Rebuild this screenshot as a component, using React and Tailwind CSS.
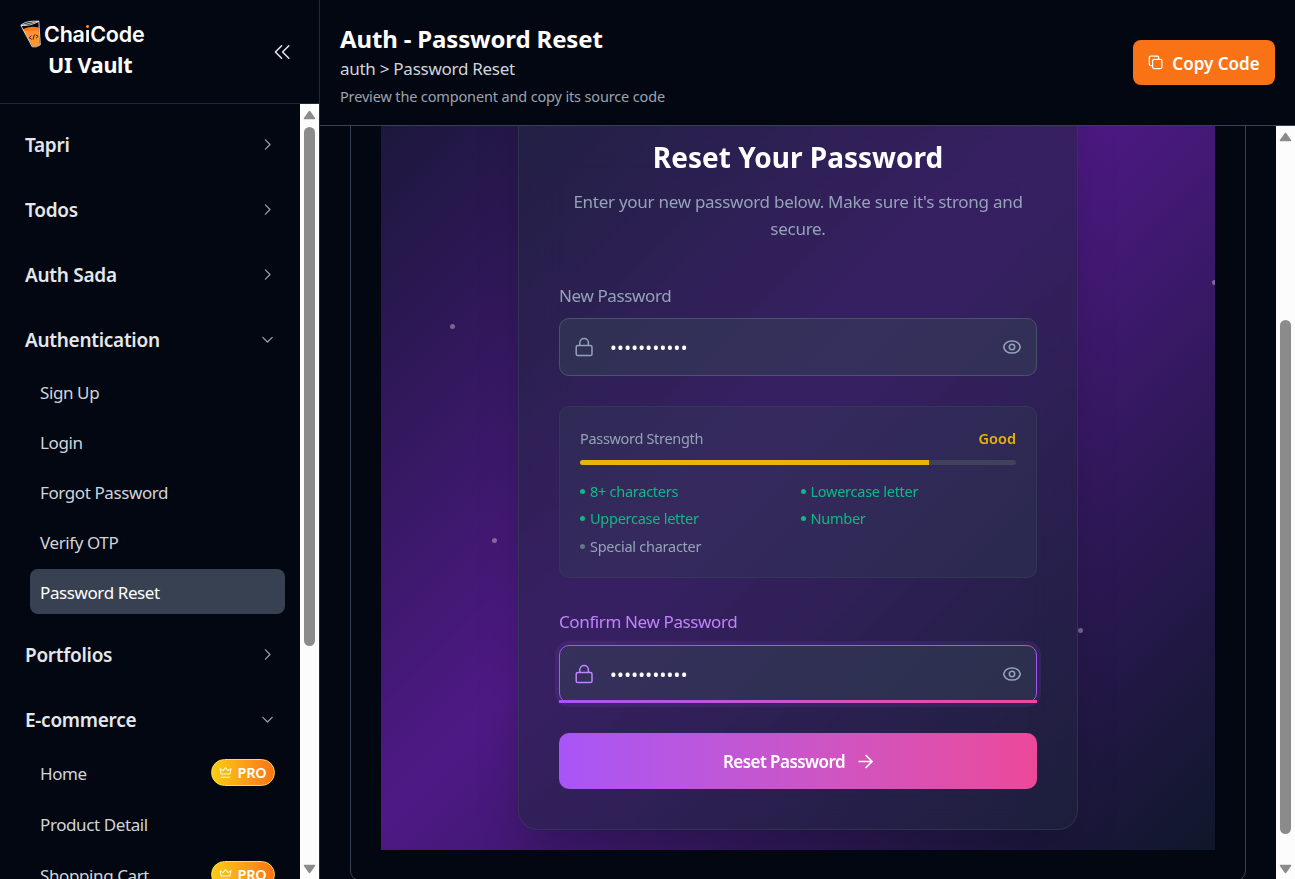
const groups = [
  { name: 'Tapri' },
  { name: 'Todos' },
  { name: 'Auth Sada' },
  {
    name: 'Authentication',
    items: [
      { name: 'Sign Up' },
      { name: 'Login' },
      { name: 'Forgot Password' },
      { name: 'Verify OTP' },
      { name: 'Password Reset', active: true },
    ],
  },
  { name: 'Portfolios' },
  {
    name: 'E-commerce',
    items: [
      { name: 'Home', pro: true },
      { name: 'Product Detail', tall: true },
      { name: 'Shopping Cart', pro: true },
    ],
  },
];

function Chevron({ open }) {
  return (
    <svg className="size-[15px] text-[#9ca3af]" viewBox="0 0 15 15" fill="none" stroke="currentColor" strokeWidth="1.2" strokeLinecap="round" strokeLinejoin="round">
      <path d={open ? 'M2.8 5.4 7.5 10l4.7-4.6' : 'M5.4 2.8 10 7.5l-4.6 4.7'} />
    </svg>
  );
}

function Cup() {
  return (
    <svg className="h-[28px] w-[22px] shrink-0" viewBox="0 0 22 28" fill="none">
      <path d="M2.7 9.2 18.6 7.8 19.8 24.8Q16 27.2 12.4 26.2Z" fill="#ff9430" />
      <path d="M2.7 9.200Q10 5.200 18.700 7.600L18.600 10Q10 11.600 3.400 10.800Z" fill="#ff7a12" />
      <path d="M.9 5.400 18.800 1.200 20.300 24.800Q16.300 27.800 12.200 26.800Z" stroke="#e2e2e2" strokeWidth=".9" />
      <path d="M.9 5.400Q9 6.600 18.800 1.400M.9 5.200Q6 .4 18.800 1.200" stroke="#e2e2e2" strokeWidth=".9" />
      <path d="m11.400 15.600-2.200 2.200 2.500 1.500M15.600 14.700l2.500 1.600-2.100 2M14.400 14.600l-1.400 5" stroke="#3b2310" strokeWidth="1" />
    </svg>
  );
}

function Pro() {
  return (
    <span className="flex h-[27px] w-16 items-center justify-center gap-[5px] rounded-full border border-[#fde047] bg-linear-to-r from-[#facc15] to-[#f97316] pt-px text-[14.500px] font-semibold tracking-[-0.2px] text-white">
      <svg className="-mt-px size-[13px]" viewBox="0 0 13 13" fill="none" stroke="#fff6d8" strokeWidth="1.1" strokeLinejoin="round">
        <path d="M2.1 8 1 2.700l3 1.900 2.500-3 2.500 3 3-1.900L10.900 8ZM1.900 11.200h9.200" />
      </svg>
      PRO
    </span>
  );
}

function Scrollbar({ thumb }) {
  return (
    <div className="flex w-[19px] shrink-0 flex-col items-center bg-[#fcfcfc]">
      <svg className="mt-[6px] h-[10px] w-[13px] shrink-0" viewBox="0 0 13 10"><path d="M6.5 1.500 11.500 8.500h-10Z" fill="#8b8b8b" stroke="#8b8b8b" strokeWidth="1.5" strokeLinejoin="round" /></svg>
      <div className={`w-[11px] shrink-0 rounded-full bg-[#8b8b8b] ${thumb}`} />
      <svg className="mt-auto mb-[5px] h-[10px] w-[13px] shrink-0" viewBox="0 0 13 10"><path d="M6.5 8.500 1.500 1.500h10Z" fill="#8b8b8b" stroke="#8b8b8b" strokeWidth="1.5" strokeLinejoin="round" /></svg>
    </div>
  );
}

function Sidebar() {
  return (
    <aside className="flex w-80 shrink-0 flex-col border-r border-[#1f2937]">
      <div className="flex h-[104px] shrink-0 items-center justify-between border-b border-[#1f2937] pr-[28px] pl-5">
        <div className="-mt-[3px] flex flex-col">
          <div className="flex h-[30px] items-center gap-[2px]">
            <Cup />
            <span className="font-['Inter'] text-[21.500px] leading-[30px] font-semibold tracking-[-0.200px] text-white">
              Cha<span className="bg-linear-to-b from-[#f98b25] from-[36%] to-white to-[36%] bg-clip-text text-transparent">i</span>Code
            </span>
          </div>
          <span className="pl-[28px] text-[21.500px] leading-8 font-bold tracking-[-0.250px] text-white">UI Vault</span>
        </div>
        <svg className="size-[18px] text-[#e5e7eb]" viewBox="0 0 18 18" fill="none" stroke="currentColor" strokeWidth="1.500" strokeLinecap="round" strokeLinejoin="round">
          <path d="M8.600 2.800 2.400 9l6.200 6.200M15.800 2.800 9.600 9l6.200 6.200" />
        </svg>
      </div>
      <div className="flex min-h-0 grow">
        <nav className="flex grow flex-col gap-5 overflow-hidden px-[15px] pt-[18px]">
          {groups.map((g) => (
            <div key={g.name} className="shrink-0">
              <div className="flex h-[45px] items-center justify-between px-[10px] text-[19px] font-semibold tracking-[-0.280px] text-[#e5e7eb]">
                <span className="pt-[2px]">{g.name}</span>
                <Chevron open={!!g.items} />
              </div>
              {g.items && (
                <div className="mt-[7px] -mb-[2px] flex flex-col gap-[5px] pl-[15px]">
                  {g.items.map((it) => (
                    <div
                      key={it.name}
                      className={`flex shrink-0 items-center justify-between rounded-lg px-[10px] text-[17px] tracking-[-0.400px] ${it.pro || it.tall ? 'h-[46px]' : 'h-[45px]'} ${it.active ? 'bg-[#374151] text-white' : 'text-[#d1d5db]'}`}
                    >
                      <span className={it.pro || it.tall ? 'pt-[3px]' : 'pt-[2px]'}>{it.name}</span>
                      {it.pro && <Pro />}
                    </div>
                  ))}
                </div>
              )}
            </div>
          ))}
        </nav>
        <Scrollbar thumb="mt-[7px] h-[519px]" />
      </div>
    </aside>
  );
}

function Field({ label, focused }) {
  return (
    <div>
      <div className={`text-[17px] leading-[27px] tracking-[-0.380px] ${focused ? 'text-[#c084fc]' : 'text-[#94a3b8]'}`}>{label}</div>
      <div className={`relative flex h-[58px] items-center rounded-[10px] border bg-[#334155]/50 px-[15px] ${focused ? 'mt-[10px] border-[#a855f7] shadow-[0_0_0_4px_rgba(168,85,247,0.1)]' : 'mt-[9px] border-[#475569]'}`}>
        <svg className={`h-5 w-[19px] ${focused ? 'text-[#c084fc]' : 'text-[#94a3b8]'}`} viewBox="0 0 19 20" fill="none" stroke="currentColor" strokeWidth="1.500">
          <rect x="1.200" y="8.600" width="15.800" height="10" rx="1.600" />
          <path d="M4.800 8.600V5.800a4.300 4.300 0 0 1 8.600 0v2.800" />
        </svg>
        <span className="ml-[16px] text-[18px] tracking-[0.300px] text-white">•••••••••••</span>
        <svg className="ml-auto h-[16px] w-[20px] translate-x-px text-[#94a3b8]" viewBox="0 0 20 16" fill="none" stroke="currentColor" strokeWidth="1.500">
          <path d="M1.700 8C2.500 4.300 5.800 1.900 10 1.900S17.500 4.300 18.300 8C17.500 11.700 14.200 14.100 10 14.100S2.500 11.700 1.700 8Z" />
          <circle cx="10" cy="8" r="2.700" />
        </svg>
        {focused && <div className="absolute -inset-x-px -bottom-px h-[3px] bg-linear-to-r from-[#a855f7] to-[#ec4899]" />}
      </div>
    </div>
  );
}

const rules = ['8+ characters', 'Lowercase letter', 'Uppercase letter', 'Number', 'Special character'];

function Strength() {
  return (
    <div className="mt-[30px] h-[172px] rounded-[10px] border border-[#334155]/60 bg-[#334155]/30 px-5 pt-[21px]">
      <div className="flex h-[22px] items-center justify-between text-[14.500px] tracking-[-0.320px] text-[#94a3b8]">
        Password Strength
        <span className="font-semibold tracking-normal text-[#eab308]">Good</span>
      </div>
      <div className="mt-[10px] h-[5px] overflow-hidden rounded-full bg-[#3f4259]">
        <div className="h-full w-4/5 bg-[#eab308]" />
      </div>
      <div className="mt-[15px] grid grid-cols-2 gap-x-[5px] gap-y-[4.400px] text-[14.500px] leading-[23px] tracking-[-0.260px]">
        {rules.map((r, i) => (
          <div key={r} className={`flex items-center gap-[5px] ${i < 4 ? 'text-[#10b981]' : 'text-[#94a3b8]'}`}>
            <i className={`size-[5px] rounded-full ${i < 4 ? 'bg-[#10b981]' : 'bg-[#64748b]'}`} />
            {r}
          </div>
        ))}
      </div>
    </div>
  );
}

function Preview() {
  return (
    <div className="relative h-[896px] overflow-hidden bg-[linear-gradient(135deg,#0f172a_0%,#4e1985_50%,#0f172a_100%)] px-[137px] pt-5">
      <i className="absolute top-[370px] left-[69px] size-[5px] rounded-full bg-white/35" />
      <i className="absolute top-[584px] left-[111px] size-[5px] rounded-full bg-white/35" />
      <i className="absolute top-[674px] left-[697px] size-[5px] rounded-full bg-white/35" />
      <i className="absolute top-[326px] left-[831px] size-[5px] rounded-full bg-white/35" />
      <div className="relative h-[856px] rounded-[20px] border border-[#334155]/60 bg-[linear-gradient(rgba(30,41,59,0.45),rgba(30,41,59,0.45))] px-10 pt-[164px] shadow-[0_25px_50px_-12px_rgba(0,0,0,0.25)] backdrop-blur-xl">
        <h2 className="text-center text-[28px] leading-9 font-bold text-white">Reset Your Password</h2>
        <p className="mt-[13px] mb-[40px] text-center text-[17px] leading-[27px] tracking-[-0.270px] text-[#94a3b8]">
          Enter your new password below. Make sure it's strong and<br />secure.
        </p>
        <Field label="New Password" />
        <Strength />
        <div className="mt-[30px]">
          <Field label="Confirm New Password" focused />
        </div>
        <button className="mt-[30px] flex h-14 w-full items-center justify-center gap-[13px] rounded-[10px] bg-linear-to-r from-[#a855f7] to-[#ec4899] text-[17px] font-semibold tracking-[-0.560px] text-white">
          <span className="pt-[2px]">Reset Password</span>
          <svg className="size-[15px]" viewBox="0 0 15 15" fill="none" stroke="currentColor" strokeWidth="1.600">
            <path d="M.5 7.500h13.500M7.500 1l6.500 6.500L7.500 14" />
          </svg>
        </button>
      </div>
    </div>
  );
}

export default function App() {
  return (
    <div className="flex h-[879px] w-[1295px] overflow-hidden bg-[#030712] font-['Noto_Sans',sans-serif]">
      <Sidebar />
      <div className="flex min-w-0 grow flex-col">
        <header className="flex h-[126px] shrink-0 items-center justify-between border-b border-[#374151] px-5">
          <div className="flex flex-col pt-[3px]">
            <h1 className="text-[24px] leading-[36px] font-bold tracking-[-0.150px] text-white">Auth - Password Reset</h1>
            <p className="text-[17px] leading-[24px] tracking-[-0.270px] text-[#d1d5db]">auth &gt; Password Reset</p>
            <p className="mt-[3px] text-[14.500px] leading-[24px] tracking-[-0.150px] text-[#9ca3af]">Preview the component and copy its source code</p>
          </div>
          <button className="flex h-[45px] w-[142px] items-center justify-center gap-[9px] rounded-lg bg-[#f97316] text-[17px] font-semibold text-white">
            <svg className="size-[15px]" viewBox="0 0 15 15" fill="none" stroke="currentColor" strokeWidth="1.200" strokeLinejoin="round">
              <rect x="4.600" y="4.300" width="9.300" height="9.300" rx="1.500" />
              <path d="M4.600 10.600H2.800a1.500 1.500 0 0 1-1.500-1.500V2.600a1.500 1.500 0 0 1 1.500-1.500h6.400a1.500 1.500 0 0 1 1.500 1.500v1.700" />
            </svg>
            <span className="pt-[2px]">Copy Code</span>
          </button>
        </header>
        <div className="flex min-h-0 grow">
          <main className="grow overflow-hidden px-[30px]">
            <div className="-mt-[203px] rounded-[10px] border border-[#374151] p-[30px]">
              <Preview />
            </div>
          </main>
          <Scrollbar thumb="mt-[178px] h-[514px]" />
        </div>
      </div>
    </div>
  );
}
